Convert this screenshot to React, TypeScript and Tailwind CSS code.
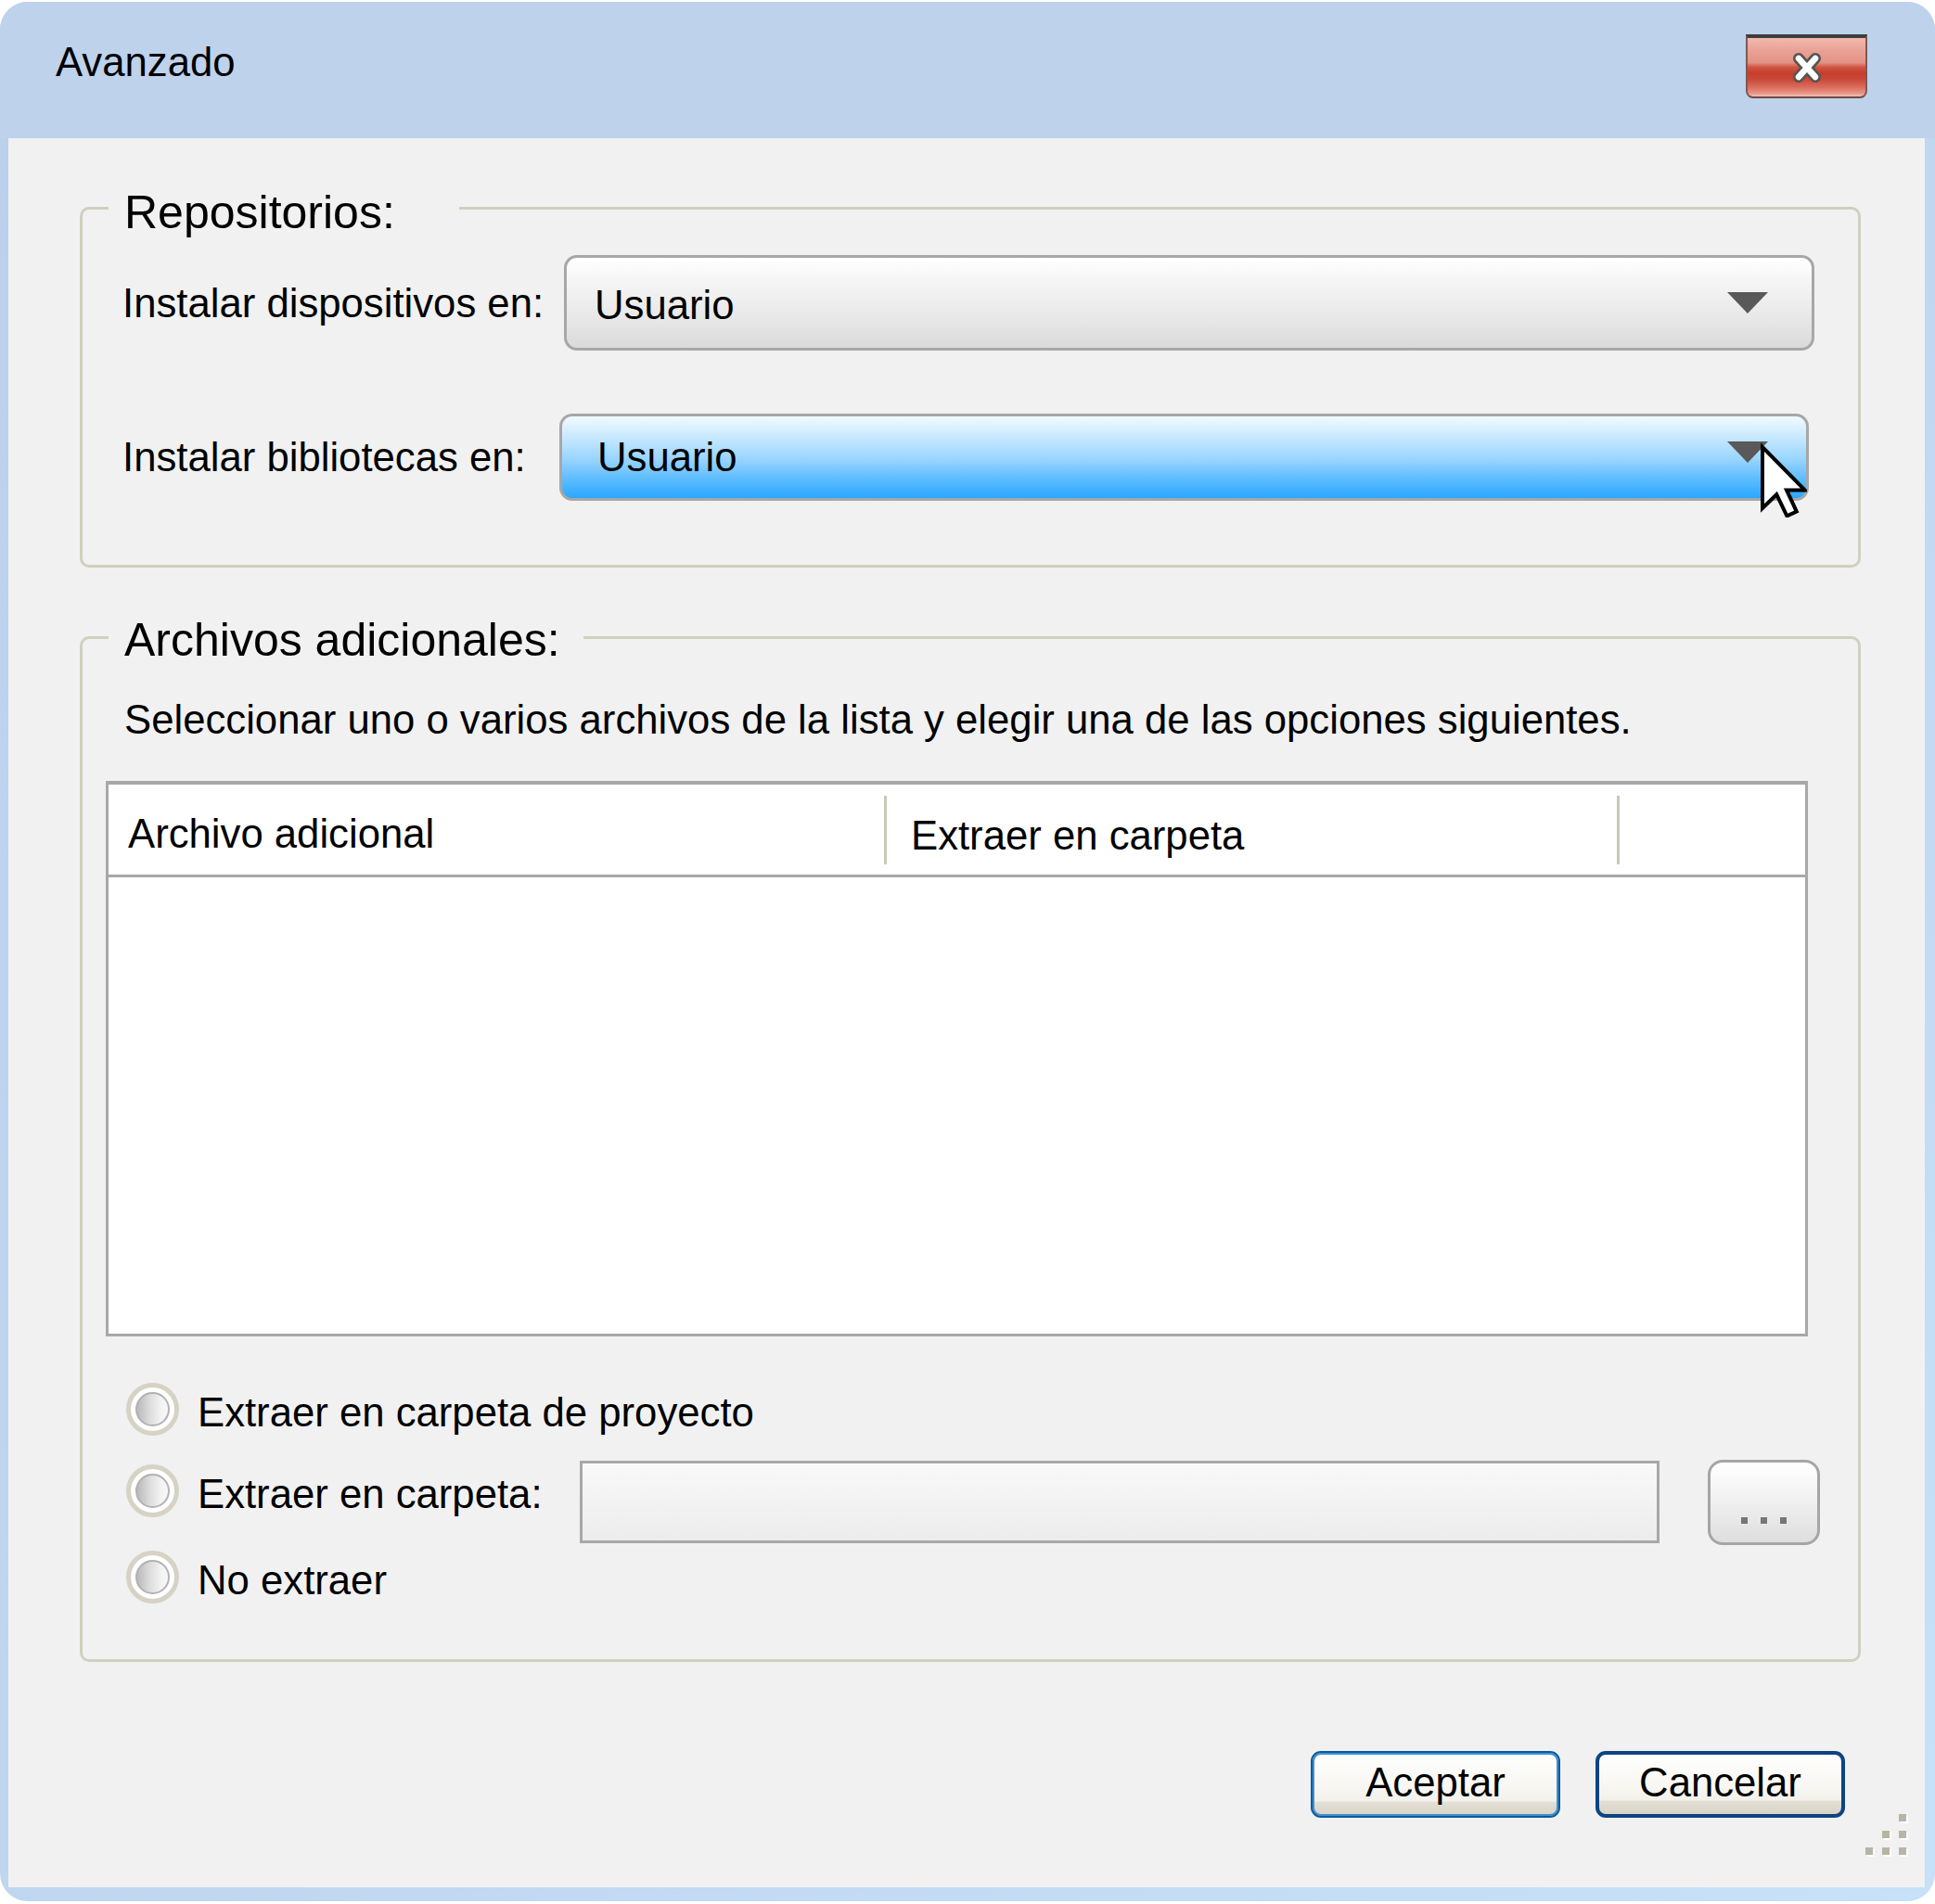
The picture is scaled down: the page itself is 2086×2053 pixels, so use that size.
import React from "react";

const FONT = "font-['Liberation_Sans',Arial,Helvetica,sans-serif]";

function Radio({ className = "" }: { className?: string }) {
  return (
    <div
      className={`w-[57px] h-[57px] shrink-0 rounded-full border-[5px] border-[#d6d2c4] bg-white flex items-center justify-center ${className}`}
    >
      <div className="w-[37px] h-[37px] rounded-full border-2 border-[#b2b2b2] bg-[linear-gradient(to_right,#b9b9b9_0%,#dcdcdc_40%,#f2f2f2_75%,#f8f8f8_100%)]" />
    </div>
  );
}

function Arrow({ className = "" }: { className?: string }) {
  return (
    <svg width="44" height="23" viewBox="0 0 44 23" className={className}>
      <polygon points="0,0 44,0 22,23" fill="#595959" />
    </svg>
  );
}

export default function App() {
  return (
    <div className={`w-[2086px] h-[2053px] bg-white pt-[2px] text-black ${FONT}`}>
      <div className="h-[2048px] rounded-[30px] overflow-hidden flex flex-col bg-[linear-gradient(to_bottom_right,#bcd0eb_0%,#c0d7f0_55%,#c6e1f8_100%)]">
        {/* Title bar */}
        <div className="h-[147px] shrink-0 bg-[#bed2ec] flex items-start justify-between pl-[60px] pr-[73px]">
          <div className="mt-[35px] h-[60px] flex items-center text-[43.7px] leading-none">Avanzado</div>
          <div className="mt-[35px] w-[131px] h-[69px] rounded-b-[8px] border-t-[4px] border-t-[#3e3e3e] border-x-2 border-b-2 border-x-[#7d5a55] border-b-[#6f4a44] bg-[linear-gradient(to_bottom,#f2b8ad_0%,#e9a195_22%,#e39385_42%,#d05443_50%,#c63f2d_60%,#c94736_70%,#d96c5b_84%,#e89888_95%,#f3c4ba_100%)] flex items-center justify-center">
            <svg width="38" height="38" viewBox="0 0 38 38">
              <g strokeLinecap="round">
                <line x1="10" y1="9" x2="28" y2="29" stroke="#555555" strokeWidth="12" />
                <line x1="28" y1="9" x2="10" y2="29" stroke="#555555" strokeWidth="12" />
                <line x1="10" y1="9" x2="28" y2="29" stroke="#ffffff" strokeWidth="6.5" />
                <line x1="28" y1="9" x2="10" y2="29" stroke="#ffffff" strokeWidth="6.5" />
              </g>
            </svg>
          </div>
        </div>

        {/* Content */}
        <div className="flex-1 ml-[9px] mr-[11px] mb-[15px] bg-[#f1f1f1] relative flex flex-col pl-[77px] pr-[69px] pt-[74px]">
          {/* Group 1 */}
          <div className="relative h-[389px] w-[1920px] shrink-0 border-[3px] border-[#d0d0be] rounded-[10px] pl-[43px] pt-[49px] flex flex-col">
            <div className="absolute left-[28px] top-[-25px] h-[56px] w-[378px] pl-[17px] bg-[#f1f1f1] flex items-center text-[50px] leading-none">
              Repositorios:
            </div>
            <div className="flex items-center">
              <div className="w-[476px] text-[43.7px] leading-none">Instalar dispositivos en:</div>
              <div className="w-[1348px] h-[103px] rounded-[14px] border-[3px] border-[#a7a7a7] bg-[linear-gradient(to_bottom,#ffffff_0%,#f8f8f8_18%,#ededed_50%,#e3e3e3_80%,#dadada_100%)] flex items-center justify-between pl-[30px] pr-[47px]">
                <span className="text-[43.7px] leading-none mt-[4px]">Usuario</span>
                <Arrow />
              </div>
            </div>
            <div className="flex items-center mt-[68px]">
              <div className="w-[471px] text-[43.7px] leading-none">Instalar bibliotecas en:</div>
              <div className="relative w-[1347px] h-[94px] rounded-[14px] border-[3px] border-[#a7a7a7] bg-[linear-gradient(to_bottom,#f2faff_0%,#cdebff_22%,#9ad5ff_52%,#5abbff_78%,#2aa7ff_100%)] flex items-center justify-between pl-[38px] pr-[41px]">
                <span className="text-[43.7px] leading-none">Usuario</span>
                <Arrow className="mb-[12px]" />
                <svg
                  width="52"
                  height="80"
                  viewBox="0 0 13 20"
                  className="absolute left-[1290px] top-[29px]"
                >
                  <path
                    d="M1,1 L1,17.5 L4.8,13.8 L7.6,19.6 L10.2,18.4 L7.5,12.6 L12.4,12.6 Z"
                    fill="#ffffff"
                    stroke="#000000"
                    strokeWidth="1"
                    strokeLinejoin="miter"
                  />
                </svg>
              </div>
            </div>
          </div>

          {/* Group 2 */}
          <div className="relative mt-[74px] h-[1106px] w-[1920px] shrink-0 border-[3px] border-[#d0d0be] rounded-[10px] pl-[25px] pt-[62px] flex flex-col">
            <div className="absolute left-[28px] top-[-27px] h-[56px] w-[512px] pl-[17px] bg-[#f1f1f1] flex items-center text-[50px] leading-none">
              Archivos adicionales:
            </div>
            <div className="ml-[20px] h-[50px] flex items-center text-[43.7px] leading-none">
              Seleccionar uno o varios archivos de la lista y elegir una de las opciones siguientes.
            </div>

            {/* Table */}
            <div className="mt-[41px] w-[1835px] h-[599px] border-[3px] border-t-[4px] border-[#a8a8a8] bg-white flex flex-col">
              <div className="h-[100px] shrink-0 border-b-[3px] border-[#a8a8a8] flex items-center">
                <div className="w-[836px] pl-[21px] text-[43.7px] leading-none mt-[8px]">Archivo adicional</div>
                <div className="w-[3px] h-[74px] bg-[#c9c9b5]" />
                <div className="w-[787px] pl-[26px] text-[43.7px] leading-none mt-[12px]">Extraer en carpeta</div>
                <div className="w-[3px] h-[74px] bg-[#c9c9b5]" />
              </div>
              <div className="flex-1 bg-white" />
            </div>

            {/* Radios */}
            <div className="mt-[48px] h-[60px] flex items-center">
              <Radio className="ml-[22px]" />
              <span className="ml-[20px] text-[43.7px] leading-none mt-[8px]">Extraer en carpeta de proyecto</span>
            </div>
            <div className="mt-[26px] h-[89px] flex items-center">
              <Radio className="ml-[22px] mb-[25px]" />
              <span className="ml-[20px] w-[412px] text-[43.7px] leading-none mb-[17px]">Extraer en carpeta:</span>
              <div className="w-[1164px] h-[89px] border-[3px] border-[#a8a8a8] bg-[linear-gradient(to_bottom,#f9f9f9,#ececec)]" />
              <div className="ml-[52px] w-[121px] h-[92px] rounded-[16px] border-[3px] border-[#a6a6a6] bg-[linear-gradient(to_bottom,#ffffff_0%,#f6f6f6_30%,#ececec_60%,#dedede_100%)] flex items-end justify-center gap-[14px] pb-[20px]">
                <div className="w-[7px] h-[7px] bg-[#767676]" />
                <div className="w-[7px] h-[7px] bg-[#767676]" />
                <div className="w-[7px] h-[7px] bg-[#767676]" />
              </div>
            </div>
            <div className="mt-[6px] h-[60px] flex items-center">
              <Radio className="ml-[22px]" />
              <span className="ml-[20px] text-[43.7px] leading-none mt-[8px]">No extraer</span>
            </div>
          </div>

          {/* Buttons */}
          <div className="mt-[96px] flex justify-end gap-[38px] mr-[17px]">
            <button className="w-[269px] h-[72px] rounded-[11px] border-[2px] border-[#0a5b9e] shadow-[inset_0_0_0_2px_#3f8fd2] bg-[linear-gradient(to_bottom,#ffffff_0%,#f8f7f3_50%,#f2f1eb_76%,#e2ded4_79%,#d9d4c7_100%)] text-[43.7px] leading-none flex items-center justify-center pb-[4px]">
              Aceptar
            </button>
            <button className="w-[269px] h-[72px] rounded-[11px] border-[4px] border-[#0e4481] bg-[linear-gradient(to_bottom,#ffffff_0%,#f8f7f3_50%,#f2f1eb_76%,#e2ded4_79%,#d9d4c7_100%)] text-[43.7px] leading-none flex items-center justify-center pb-[4px]">
              Cancelar
            </button>
          </div>

          {/* Resize grip */}
          <div className="absolute right-[20px] bottom-[35px] grid grid-cols-3 grid-rows-3 gap-[10px] w-[44px] h-[44px]">
            <div />
            <div />
            <div className="w-[8px] h-[8px] bg-[#b9b5a6] shadow-[2px_2px_0_#ffffff]" />
            <div />
            <div className="w-[8px] h-[8px] bg-[#b9b5a6] shadow-[2px_2px_0_#ffffff]" />
            <div className="w-[8px] h-[8px] bg-[#b9b5a6] shadow-[2px_2px_0_#ffffff]" />
            <div className="w-[8px] h-[8px] bg-[#b9b5a6] shadow-[2px_2px_0_#ffffff]" />
            <div className="w-[8px] h-[8px] bg-[#b9b5a6] shadow-[2px_2px_0_#ffffff]" />
            <div className="w-[8px] h-[8px] bg-[#b9b5a6] shadow-[2px_2px_0_#ffffff]" />
          </div>
        </div>
      </div>
    </div>
  );
}
